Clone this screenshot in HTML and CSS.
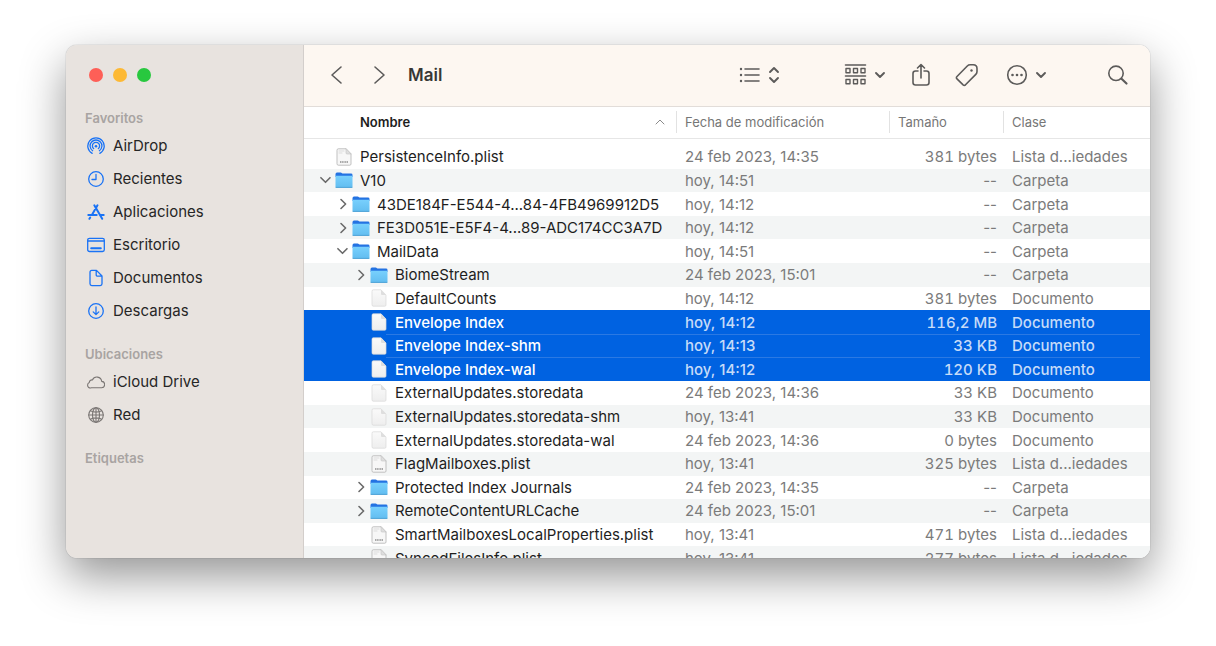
FILE: index.html
```html
<!DOCTYPE html>
<html lang="es">
<head>
    <meta charset="UTF-8">
    <meta name="viewport" content="width=device-width, initial-scale=1.0">
    <title>Mail</title>
    <link rel="stylesheet" href="styles.css">
</head>
<body>

    <!-- Shared icons -->
    <svg class="sprite" aria-hidden="true">
        <defs>
            <linearGradient id="folderFill" x1="0" y1="0" x2="0" y2="1">
                <stop offset="0" stop-color="#78d0fd"/>
                <stop offset="1" stop-color="#62bdf0"/>
            </linearGradient>
            <linearGradient id="docFill" x1="0" y1="0" x2="0" y2="1">
                <stop offset="0" stop-color="#fafafa"/>
                <stop offset="1" stop-color="#eeeeee"/>
            </linearGradient>
        </defs>
        <symbol id="folder" viewBox="0 0 18 18">
            <path d="M.5 3.200Q.5 1.600 2 1.600h3.600q.8 0 1.400.6l.5.4H16q1.500 0 1.500 1.400V6H.5z" fill="#2473e2"/>
            <path d="M.5 4.800h17v10.700q0 1.300-1.300 1.300H1.800Q.5 16.800.5 15.500z" fill="url(#folderFill)"/>
            <path d="M1 16.400h16" stroke="#4a9fd2" stroke-width=".9"/>
        </symbol>
        <symbol id="doc" viewBox="0 0 18 18">
            <path d="M2 2q0-1.200 1.200-1.200H11L16 6v10q0 1.200-1.200 1.200H3.200Q2 17.200 2 16z" fill="url(#docFill)" stroke="#d9d9d9" stroke-width=".7"/>
            <path d="M11 .8V5q0 1 1 1h4z" fill="#dedede"/>
        </symbol>
        <symbol id="plist" viewBox="0 0 18 18">
            <path d="M2 2q0-1.200 1.200-1.200H11L16 6v10q0 1.200-1.200 1.200H3.200Q2 17.200 2 16z" fill="#f7f7f7" stroke="#bababa" stroke-width=".9"/>
            <path d="M11 .8V5q0 1 1 1h4z" fill="#dedede" stroke="#c2c2c2" stroke-width=".6"/>
            <path d="M4 3h5M4 5h3" stroke="#d0d0d0" stroke-width=".7"/>
            <path d="M5 14h8" stroke="#8f8f8f" stroke-width="1.600" stroke-linecap="butt" stroke-dasharray="1.200 .5"/>
        </symbol>
        <symbol id="right" viewBox="0 0 18 18"><path d="M8 4.500l4.600 4.500L8 13.500"/></symbol>
        <symbol id="down" viewBox="0 0 18 18"><path d="M4.900 6.700L9.500 11.300l4.500-4.600"/></symbol>
    </svg>

    <div class="window">

        <nav class="sidebar">
            <div class="lights">
                <button class="light red" aria-label="Cerrar"></button>
                <button class="light yellow" aria-label="Minimizar"></button>
                <button class="light green" aria-label="Ampliar"></button>
            </div>

            <section>
                <h2>Favoritos</h2>
                <a href="#"><svg viewBox="0 0 18 18"><path d="M5.200 16.300a8.200 8.200 0 1 1 7.600 0M5.600 13.700a5.900 5.900 0 1 1 6.800 0M6.600 11.600a3.600 3.600 0 1 1 4.800 0"/><circle cx="9" cy="9.200" r="1.300" class="solid"/></svg>AirDrop</a>
                <a href="#"><svg viewBox="0 0 18 18"><circle cx="9" cy="9" r="7.300"/><path d="M9 4.500V9.500H5"/></svg>Recientes</a>
                <a href="#"><svg viewBox="0 0 18 18" class="bold"><path d="M10.500 2.300L5 11.700M3.200 14.500l-.8 1.300M7.300 2.300l7.900 13.500M1.300 11.900h8.400M12.800 11.900h3.900"/></svg>Aplicaciones</a>
                <a href="#"><svg viewBox="0 0 18 18"><rect x=".7" y="2.300" width="16.600" height="13.200" rx="1.800"/><path d="M1 5h16"/><path d="M4.200 12.200h9.600" class="bar"/></svg>Escritorio</a>
                <a href="#"><svg viewBox="0 0 18 18"><path d="M3 3.200q0-1.800 1.800-1.800h4.700L15 7v7.800q0 1.800-1.800 1.800H4.800Q3 16.600 3 14.800zM9.200 1.500V5.700q0 1.500 1.500 1.500h4.200"/></svg>Documentos</a>
                <a href="#"><svg viewBox="0 0 18 18"><circle cx="9" cy="9" r="7.300"/><path d="M9 5v7.500M6.200 9.900L9 12.600l2.800-2.700"/></svg>Descargas</a>
            </section>

            <section class="places">
                <h2>Ubicaciones</h2>
                <a href="#"><svg viewBox="0 0 18 18"><path d="M4.300 14.800h9.900a3.200 3.200 0 0 0 .5-6.400 4.900 4.900 0 0 0-9.300-1.500 2.700 2.700 0 0 0-3.100 2.600 2.800 2.800 0 0 0-1.700 2.600 2.700 2.700 0 0 0 3.700 2.700z"/></svg>iCloud Drive</a>
                <a href="#"><svg viewBox="0 0 18 18"><circle cx="9" cy="9" r="7.300"/><ellipse cx="9" cy="9" rx="3.500" ry="7.300"/><path d="M9 1.700v14.600M1.700 9h14.600M3.300 4.800q5.700 2.700 11.400 0M3.300 13.200q5.700-2.700 11.400 0"/></svg>Red</a>
            </section>

            <section>
                <h2>Etiquetas</h2>
            </section>
        </nav>

        <main class="content">
            <header class="toolbar">
                <button aria-label="Atrás"><svg width="20" height="20" viewBox="0 0 20 20"><path d="M14 2L5 10l9 8"/></svg></button>
                <button class="forward" aria-label="Adelante"><svg width="20" height="20" viewBox="0 0 20 20"><path d="M6 2l9 8-9 8"/></svg></button>
                <h1>Mail</h1>
                <div class="tools">
                    <button class="view" aria-label="Visualización">
                        <svg width="22" height="22" viewBox="0 0 22 22"><path d="M6 5h14M6 11h14M6 17h14"/><circle cx="2" cy="5" r="1.200" class="dot"/><circle cx="2" cy="11" r="1.200" class="dot"/><circle cx="2" cy="17" r="1.200" class="dot"/></svg>
                        <svg width="12" height="22" viewBox="0 0 12 22"><path d="M2 8l4-4 4 4M2 14l4 4 4-4" class="heavy"/></svg>
                    </button>
                    <button class="group" aria-label="Agrupar">
                        <svg width="24" height="22" viewBox="0 0 24 22"><path d="M2.500 1h20M2.500 12h20"/><path d="M3 4.500h4v4.300H3zM10.500 4.500h4v4.300h-4zM18 4.500h4v4.300h-4zM3 15.500h4v4.300H3zM10.500 15.500h4v4.300h-4zM18 15.500h4v4.300h-4z" class="boxes"/></svg>
                        <svg width="12" height="22" viewBox="0 0 12 22"><path d="M2 9l4 4 4-4" class="heavy"/></svg>
                    </button>
                    <button class="share" aria-label="Compartir">
                        <svg width="22" height="24" viewBox="0 0 22 24"><path d="M8 8H5.500Q3 8 3 10.500v9Q3 22 5.500 22h11q2.500 0 2.500-2.500v-9Q19 8 16.500 8H14M11 15V1.500M7.500 5L11 1.500 14.500 5"/></svg>
                    </button>
                    <button class="tag" aria-label="Etiquetas">
                        <svg width="24" height="24" viewBox="0 0 24 24"><path d="M2 13.500L12.300 3Q13.500 1.800 15.200 1.800h3Q22 2 22 5.500v3q0 1.700-1.200 2.900L10.500 21.800q-1.200 1.100-2.400 0L2 15.900q-1.200-1.200 0-2.400z"/><circle cx="16.500" cy="7.500" r="1.200" class="dot"/></svg>
                    </button>
                    <button class="more" aria-label="Acciones">
                        <svg width="22" height="22" viewBox="0 0 22 22"><circle cx="11" cy="11" r="9.300"/><circle cx="6.500" cy="11" r="1.300" class="dot"/><circle cx="11" cy="11" r="1.300" class="dot"/><circle cx="15.500" cy="11" r="1.300" class="dot"/></svg>
                        <svg width="12" height="22" viewBox="0 0 12 22"><path d="M2 9l4 4 4-4" class="heavy"/></svg>
                    </button>
                    <button aria-label="Buscar">
                        <svg width="22" height="22" viewBox="0 0 22 22"><circle cx="9" cy="9.300" r="7.200"/><path d="M14.500 14.800l5 4.700" class="thick"/></svg>
                    </button>
                </div>
            </header>

            <table class="files">
                <thead>
                    <tr>
                        <th scope="col" class="sorted">Nombre <svg width="10" height="8" viewBox="0 0 10 8"><path d="M1 6l4-4 4 4"/></svg></th>
                        <th scope="col">Fecha de modificación</th>
                        <th scope="col">Tamaño</th>
                        <th scope="col">Clase</th>
                    </tr>
                </thead>
                <tbody>
                    <tr><td class="leaf"><svg><use href="#plist"/></svg>PersistenceInfo.plist</td><td>24 feb 2023, 14:35</td><td>381 bytes</td><td>Lista d...iedades</td></tr>
                    <tr><td><button aria-label="Contraer"><svg><use href="#down"/></svg></button><svg><use href="#folder"/></svg>V10</td><td>hoy, 14:51</td><td>--</td><td>Carpeta</td></tr>
                    <tr class="level-1"><td><button aria-label="Expandir"><svg><use href="#right"/></svg></button><svg><use href="#folder"/></svg>43DE184F-E544-4...84-4FB4969912D5</td><td>hoy, 14:12</td><td>--</td><td>Carpeta</td></tr>
                    <tr class="level-1"><td><button aria-label="Expandir"><svg><use href="#right"/></svg></button><svg><use href="#folder"/></svg>FE3D051E-E5F4-4...89-ADC174CC3A7D</td><td>hoy, 14:12</td><td>--</td><td>Carpeta</td></tr>
                    <tr class="level-1"><td><button aria-label="Contraer"><svg><use href="#down"/></svg></button><svg><use href="#folder"/></svg>MailData</td><td>hoy, 14:51</td><td>--</td><td>Carpeta</td></tr>
                    <tr class="level-2"><td><button aria-label="Expandir"><svg><use href="#right"/></svg></button><svg><use href="#folder"/></svg>BiomeStream</td><td>24 feb 2023, 15:01</td><td>--</td><td>Carpeta</td></tr>
                    <tr class="level-2"><td class="leaf"><svg><use href="#doc"/></svg>DefaultCounts</td><td>hoy, 14:12</td><td>381 bytes</td><td>Documento</td></tr>
                    <tr class="level-2 selected"><td class="leaf"><svg><use href="#doc"/></svg>Envelope Index</td><td>hoy, 14:12</td><td>116,2 MB</td><td>Documento</td></tr>
                    <tr class="level-2 selected"><td class="leaf"><svg><use href="#doc"/></svg>Envelope Index-shm</td><td>hoy, 14:13</td><td>33 KB</td><td>Documento</td></tr>
                    <tr class="level-2 selected"><td class="leaf"><svg><use href="#doc"/></svg>Envelope Index-wal</td><td>hoy, 14:12</td><td>120 KB</td><td>Documento</td></tr>
                    <tr class="level-2"><td class="leaf"><svg><use href="#doc"/></svg>ExternalUpdates.storedata</td><td>24 feb 2023, 14:36</td><td>33 KB</td><td>Documento</td></tr>
                    <tr class="level-2"><td class="leaf"><svg><use href="#doc"/></svg>ExternalUpdates.storedata-shm</td><td>hoy, 13:41</td><td>33 KB</td><td>Documento</td></tr>
                    <tr class="level-2"><td class="leaf"><svg><use href="#doc"/></svg>ExternalUpdates.storedata-wal</td><td>24 feb 2023, 14:36</td><td>0 bytes</td><td>Documento</td></tr>
                    <tr class="level-2"><td class="leaf"><svg><use href="#plist"/></svg>FlagMailboxes.plist</td><td>hoy, 13:41</td><td>325 bytes</td><td>Lista d...iedades</td></tr>
                    <tr class="level-2"><td><button aria-label="Expandir"><svg><use href="#right"/></svg></button><svg><use href="#folder"/></svg>Protected Index Journals</td><td>24 feb 2023, 14:35</td><td>--</td><td>Carpeta</td></tr>
                    <tr class="level-2"><td><button aria-label="Expandir"><svg><use href="#right"/></svg></button><svg><use href="#folder"/></svg>RemoteContentURLCache</td><td>24 feb 2023, 15:01</td><td>--</td><td>Carpeta</td></tr>
                    <tr class="level-2"><td class="leaf"><svg><use href="#plist"/></svg>SmartMailboxesLocalProperties.plist</td><td>hoy, 13:41</td><td>471 bytes</td><td>Lista d...iedades</td></tr>
                    <tr class="level-2"><td class="leaf"><svg><use href="#plist"/></svg>SyncedFilesInfo.plist</td><td>hoy, 13:41</td><td>277 bytes</td><td>Lista d...iedades</td></tr>
                </tbody>
            </table>
        </main>

    </div>

</body>
</html>
```
FILE: styles.css
```css
* {
    box-sizing: border-box;
}

body {
    margin: 0;
    padding: 45px 66px 88px;
    height: 100vh;
    overflow: hidden;
    background: #fff;
    font-family: Inter, "Liberation Sans", sans-serif;
    font-size: 15px;
    color: #262626;
}

.sprite {
    position: absolute;
    width: 0;
    height: 0;
}

button {
    padding: 0;
    border: none;
    background: none;
    color: inherit;
}

svg {
    flex: none;
    fill: none;
    stroke: currentColor;
    stroke-linecap: round;
    stroke-linejoin: round;
}

.window {
    display: flex;
    height: 100%;
    border-radius: 11px;
    overflow: hidden;
    box-shadow: 0 0 1px rgba(0, 0, 0, 0.5), 0 18px 45px rgba(0, 0, 0, 0.42);
}

/* Sidebar */
.sidebar {
    flex: none;
    width: 238px;
    padding: 23px 19px 0;
    background: #e8e3df;
    border-right: 1px solid #d3cecb;
}

.lights {
    display: flex;
    gap: 10px;
    padding-left: 4px;
    margin-bottom: 25px;
}

.light {
    width: 14px;
    height: 14px;
    border-radius: 50%;
}

.red {
    background: #fe5f57;
}

.yellow {
    background: #fdb935;
}

.green {
    background: #28c83f;
}

.sidebar section {
    margin-bottom: 16px;
}

.sidebar h2 {
    margin: 0;
    font-size: 13px;
    font-weight: 600;
    line-height: 22px;
    color: #a8a4a2;
}

.sidebar a {
    display: flex;
    align-items: center;
    gap: 8px;
    padding-left: 2px;
    line-height: 33px;
    color: #262626;
    text-decoration: none;
}

.sidebar a svg {
    width: 18px;
    height: 18px;
    stroke: #1a73f5;
    stroke-width: 1.3;
}

.sidebar a .bold {
    stroke-width: 2;
}

.sidebar a .bar {
    stroke-width: 2;
}

.sidebar a .solid {
    fill: #1a73f5;
    stroke: none;
}

.sidebar .places svg {
    stroke: #7a7674;
    stroke-width: 1.1;
}

/* Toolbar */
.content {
    flex: 1;
    min-width: 0;
    background: #fff;
}

.toolbar {
    display: flex;
    align-items: center;
    height: 62px;
    padding: 0 21px 1px 23px;
    background: #fdf7f1;
    border-bottom: 1px solid #e2ddd9;
    color: #5c5b5a;
}

.toolbar button {
    display: flex;
    align-items: center;
}

.toolbar svg {
    stroke-width: 1.6;
}

.toolbar .thick {
    stroke-width: 2.2;
}

.toolbar .heavy {
    stroke-width: 1.9;
}

.toolbar .boxes {
    stroke-width: 1.4;
}

.toolbar .dot {
    fill: currentColor;
    stroke: none;
}

.toolbar .forward {
    margin-left: 22px;
}

.toolbar h1 {
    margin: 0 0 0 19px;
    font-size: 17px;
    font-weight: 600;
    color: #383736;
}

.tools {
    display: flex;
    align-items: center;
    margin-left: auto;
}

.view {
    gap: 7px;
    margin-right: 63px;
}

.group {
    gap: 7px;
    margin-right: 24px;
}

.share {
    margin-right: 23px;
}

.tag {
    margin-right: 27px;
}

.more {
    gap: 7px;
    margin-right: 60px;
}

/* File list */
.files,
.files thead,
.files tbody,
.files tr {
    display: grid;
}

.files {
    grid-template-columns: minmax(0, 1fr) 213px 114px 147px;
}

.files thead,
.files tbody,
.files tr {
    grid-column: 1 / -1;
    grid-template-columns: subgrid;
}

.files thead {
    margin-bottom: 6px;
    border-bottom: 1px solid #e6e6e6;
}

.files th {
    display: flex;
    align-items: center;
    justify-content: space-between;
    height: 22px;
    margin: 4px 0 5px;
    padding: 0 9px 0 8px;
    border-left: 1px solid #e2e2e2;
    font-size: 13px;
    font-weight: 400;
    color: #767676;
}

.files .sorted {
    padding: 0 11px 0 56px;
    border-left: none;
    font-weight: 600;
    color: #1e1e1e;
}

.sorted svg {
    color: #8a8a8a;
}

.files tbody {
    grid-template-rows: repeat(18, 1fr);
    height: 425px;
}

.files tbody tr:nth-child(even) {
    background: #f3f5f5;
}

.files td {
    display: flex;
    align-items: center;
    padding: 0 9px;
    color: #7b7b7b;
    white-space: nowrap;
}

.files td:first-child {
    padding: 0 0 0 12px;
    color: #1e1e1e;
}

.files td:nth-child(3) {
    justify-content: flex-end;
    padding-right: 6px;
}

/* Sizes line up by digit; folders only show dashes */
.files .leaf ~ td:nth-child(3) {
    font-variant-numeric: tabular-nums;
}

.files .level-1 td:first-child {
    padding-left: 29px;
}

.files .level-2 td:first-child {
    padding-left: 47px;
}

.files td svg {
    display: block;
    width: 18px;
    height: 18px;
}

.files td > svg {
    margin: 0 7px 0 1px;
    stroke: none;
}

.files td button {
    color: #6a6a6a;
    stroke-width: 1.6;
}

/* Rows without a disclosure arrow keep its width */
.files .leaf::before {
    content: "";
    width: 18px;
}

.files tbody tr.selected {
    position: relative;
    background: #0062e1;
}

.files tbody .selected td {
    color: #c6dbf8;
    font-weight: 500;
}

.files tbody .selected td:first-child {
    color: #fff;
}

/* Hairline between neighbouring selected rows */
.files .selected + .selected::before {
    content: "";
    position: absolute;
    top: 0;
    left: 82px;
    right: 10px;
    height: 1px;
    background: #2b79e3;
}
```
